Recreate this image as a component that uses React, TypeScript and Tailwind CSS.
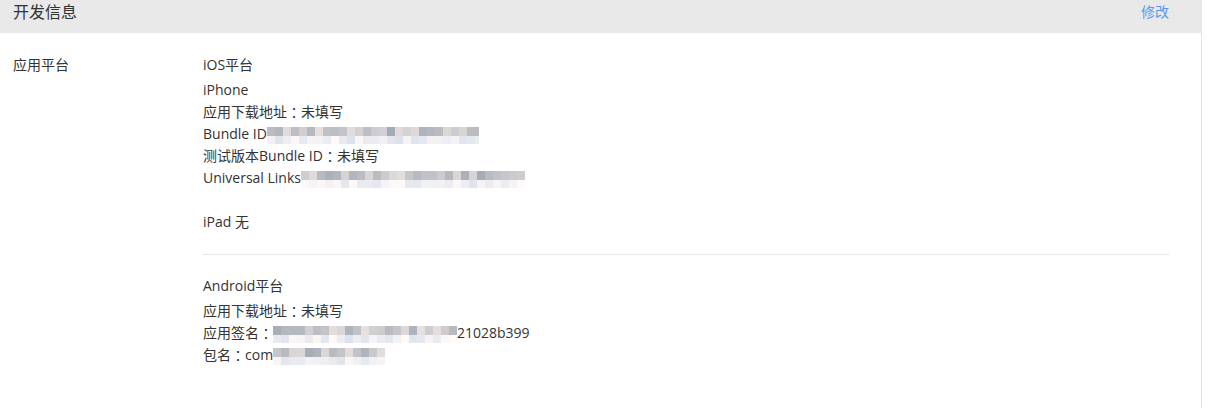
import React from 'react';

// deterministic grey mosaic used for the blurred values
function shades(seed: number, count: number, light: boolean) {
  const out: string[] = [];
  let s = seed;
  for (let i = 0; i < count; i++) {
    s = (s * 9301 + 49297) % 233280;
    const r = s / 233280;
    const base = light ? 226 + Math.round(r * 24) : 170 + Math.round(r * 54);
    const tint = Math.round((r - 0.5) * 12);
    out.push(`rgb(${base + tint}, ${base}, ${base - tint + 4})`);
  }
  return out;
}

function Mosaic({ width, seed }: { width: number; seed: number }) {
  const count = Math.ceil(width / 8);
  const top = shades(seed, count, false);
  const bottom = shades(seed + 7, count, true);
  return (
    <span className="inline-flex flex-col align-middle mt-[2px]" style={{ width }}>
      <span className="flex h-[9px] overflow-hidden">
        {top.map((c, i) => (
          <span key={i} className="w-[8px] h-[9px] shrink-0" style={{ backgroundColor: c }} />
        ))}
      </span>
      <span className="flex h-[8px] overflow-hidden">
        {bottom.map((c, i) => (
          <span key={i} className="w-[8px] h-[8px] shrink-0" style={{ backgroundColor: c }} />
        ))}
      </span>
    </span>
  );
}

// full-width colon, centred like in the original UI font
function Colon() {
  return (
    <span
      className="inline-block align-top h-[22px] leading-[22px]"
      style={{ fontFamily: '"Noto Sans CJK TC", sans-serif' }}
    >
      ：
    </span>
  );
}

export default function App() {
  const font = { fontFamily: '"Open Sans", "Noto Sans CJK SC", sans-serif' };
  return (
    <div className="w-[1216px] h-[408px] bg-white overflow-hidden text-[#333]" style={font}>
      <div className="w-[1202px] h-full border-r border-[#e4e4e4]">
        <div className="h-[33px] bg-[#e9e9e9] flex items-start justify-between pl-[13px] pr-[32px] pt-[1px]">
          <span className="text-[16px] leading-[22px]">开发信息</span>
          <a className="text-[14px] leading-[22px] text-[#5b96f0] cursor-pointer">修改</a>
        </div>

        <div className="flex pl-[13px] pr-[32px] pt-[21px] text-[14px] leading-[22px]">
          <div className="w-[190px] shrink-0">应用平台</div>

          <div className="flex-1">
            <div>iOS平台</div>
            <div className="mt-[3px]">iPhone</div>
            <div className="h-[22px]">
              应用下载地址<Colon />未填写
            </div>
            <div className="flex items-center h-[22px]">
              Bundle ID
              <Mosaic width={212} seed={3} />
            </div>
            <div className="h-[22px]">
              测试版本Bundle ID<Colon />未填写
            </div>
            <div className="flex items-center h-[22px]">
              Universal Links
              <Mosaic width={224} seed={11} />
            </div>
            <div className="mt-[22px]">iPad 无</div>

            <div className="mt-[21px] border-t border-[#e6e6e6]" />

            <div className="mt-[20px]">Android平台</div>
            <div className="mt-[3px] h-[22px]">
              应用下载地址<Colon />未填写
            </div>
            <div className="flex items-center h-[22px]">
              应用签名<Colon />
              <Mosaic width={184} seed={21} />
              21028b399
            </div>
            <div className="flex items-center h-[22px]">
              包名<Colon />com
              <Mosaic width={112} seed={33} />
            </div>
          </div>
        </div>
      </div>
    </div>
  );
}
